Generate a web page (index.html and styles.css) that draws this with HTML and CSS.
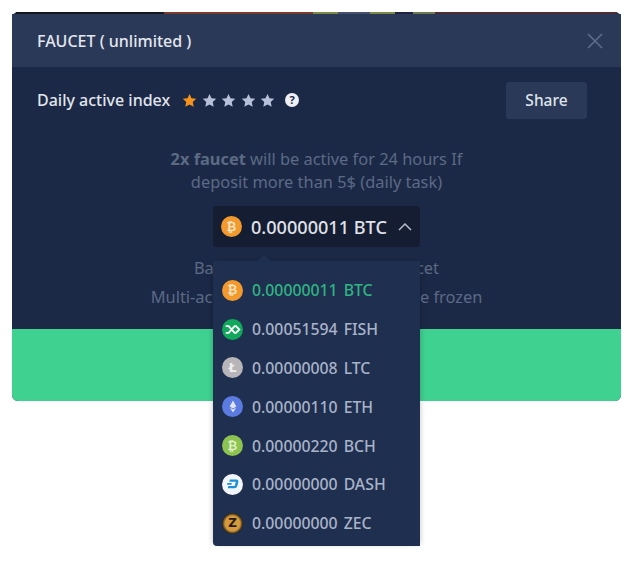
FILE: index.html
```html
<!DOCTYPE html>
<html lang="en">
<head>
<meta charset="utf-8">
<title>Faucet</title>
<link rel="stylesheet" href="styles.css">
</head>
<body>
<main class="modal">
  <div class="strip"><i class="s1"></i><i class="s2"></i><i class="s3"></i><i class="s4"></i><i class="s5"></i><i class="s6"></i><i class="s7"></i><i class="s8"></i></div>
  <header class="head">
    <h1 class="title">FAUCET ( unlimited )</h1>
    <svg class="close" viewBox="0 0 16 16" width="16" height="16"><path d="M1 1l14 14M15 1L1 15" stroke="#5f6d88" stroke-width="1.6" fill="none"/></svg>
  </header>
  <section class="content">
    <div class="index-row">
      <span class="index-label">Daily active index</span>
      <span class="stars">
        <svg class="star" viewBox="0 0 24 24"><path class="on" d="M12 1.500l3.200 6.900 7.600.9-5.600 5.200 1.500 7.500L12 18.300l-6.700 3.700 1.500-7.500L1.200 9.300l7.600-.9z"/></svg>
        <svg class="star" viewBox="0 0 24 24"><path d="M12 1.500l3.200 6.900 7.600.9-5.600 5.200 1.500 7.500L12 18.300l-6.700 3.700 1.500-7.500L1.200 9.300l7.600-.9z"/></svg>
        <svg class="star" viewBox="0 0 24 24"><path d="M12 1.500l3.200 6.900 7.600.9-5.600 5.200 1.500 7.500L12 18.300l-6.700 3.700 1.500-7.500L1.200 9.300l7.600-.9z"/></svg>
        <svg class="star" viewBox="0 0 24 24"><path d="M12 1.500l3.200 6.900 7.600.9-5.600 5.200 1.500 7.500L12 18.300l-6.700 3.700 1.500-7.500L1.200 9.300l7.600-.9z"/></svg>
        <svg class="star" viewBox="0 0 24 24"><path d="M12 1.500l3.200 6.900 7.600.9-5.600 5.200 1.500 7.500L12 18.300l-6.700 3.700 1.500-7.500L1.200 9.300l7.600-.9z"/></svg>
      </span>
      <span class="help">?</span>
      <button class="share">Share</button>
    </div>
    <p class="note"><b>2x faucet</b> will be active for 24 hours If<br>deposit more than 5$ (daily task)</p>
    <div class="picker">
      <div class="selected">
        <span class="coin btc">₿</span>
        <span class="sel-text">0.00000011 BTC</span>
        <svg class="chev" viewBox="0 0 14 8" width="14" height="8"><path d="M1 7l6-6 6 6" stroke="#b4bac8" stroke-width="1.500" fill="none"/></svg>
      </div>
    </div>
    <p class="rule">Balance must be 0 to use faucet</p>
    <p class="rule">Multi-account abuse, balance will be frozen</p>
    <ul class="menu">
      <li class="item active"><span class="coin btc">₿</span><span class="amt">0.00000011</span><span>BTC</span></li>
      <li class="item"><span class="coin fish"><svg viewBox="0 0 20 20" width="17" height="17"><path d="M2 6h3.500l7 8H14l4-4-4-4h-1.500l-7 8H2" stroke="#fff" stroke-width="2.200" fill="none"/></svg></span><span class="amt">0.00051594</span><span>FISH</span></li>
      <li class="item"><span class="coin ltc">Ł</span><span class="amt">0.00000008</span><span>LTC</span></li>
      <li class="item"><span class="coin eth"><svg viewBox="0 0 12 18" width="8" height="13"><path d="M6 0l5 9-5 3-5-3zM1 10.500l5 3 5-3-5 7.500z" fill="#dfe5fb"/></svg></span><span class="amt">0.00000110</span><span>ETH</span></li>
      <li class="item"><span class="coin bch">₿</span><span class="amt">0.00000220</span><span>BCH</span></li>
      <li class="item"><span class="coin dash"><svg viewBox="0 0 20 20" width="16" height="16"><path d="M6 4.500h8q3.200 0 2.600 3l-1 4.500q-.6 3.200-3.600 3.200H3.500l.6-2.700h8l1.500-5.300H5.400zM3 8.800h5.500l-.5 2.200H2.500z" fill="#1c8fd6"/></svg></span><span class="amt">0.00000000</span><span>DASH</span></li>
      <li class="item"><span class="coin zec">Z</span><span class="amt">0.00000000</span><span>ZEC</span></li>
    </ul>
  </section>
  <div class="action"></div>
</main>
</body>
</html>
```
FILE: styles.css
```css
* { box-sizing: border-box; }
html, body { margin: 0; padding: 0; background: #fff; }
body { font-family: "Noto Sans", "Open Sans", sans-serif; height: 570px; overflow: hidden; }

.modal {
  position: relative;
  width: 609px;
  height: 389px;
  margin: 12px 0 0 12px;
  display: flex;
  flex-direction: column;
  background: #1b2947;
  border-radius: 6px;
}
.strip { display: flex; height: 2px; flex: none; margin: 0 4px; overflow: hidden; }
.strip i { display: block; height: 2px; }
.s1 { width: 148px; background: #17171f; }
.s2 { width: 149px; background: #7a3a2c; }
.s3 { width: 25px; background: #7d8a45; }
.s4 { width: 32px; background: #49506a; }
.s5 { width: 25px; background: #7d8a45; }
.s6 { width: 18px; background: #20223c; }
.s7 { width: 22px; background: #6d7a50; }
.s8 { width: 182px; background: #4d2c33; }

.head {
  flex: none;
  height: 53px;
  display: flex;
  align-items: center;
  justify-content: space-between;
  padding: 0 18px 0 25px;
  background: #2a3958;
}
.title { margin: 0; font-size: 16px; font-weight: 500; color: #e4e7ee; }

.content { position: relative; flex: 1; }
.index-row { display: flex; align-items: center; height: 66px; padding: 0 34px 0 25px; }
.index-label { font-size: 16px; font-weight: 500; color: #e2e5ec; }
.stars { display: flex; gap: 4.500px; margin-left: 12px; }
.star { width: 15px; height: 15px; }
.star path { fill: #b6c0d8; }
.star path.on { fill: #f6931c; }
.help {
  width: 14px; height: 14px; margin-left: 10px; border-radius: 50%;
  background: #eef0f4; color: #1b2947;
  font-size: 11px; font-weight: 700; line-height: 14px; text-align: center;
}
.share {
  margin-left: auto;
  width: 81px; height: 37px;
  border: 0; border-radius: 3px;
  background: #2a3958; color: #dfe3ea;
  font: 500 15.500px "Noto Sans", sans-serif;
}
.note {
  margin: 14px 0 0;
  font-size: 16.400px; line-height: 23px; text-align: center; color: #5c6a84;
}
.note b { font-weight: 700; }
.picker { display: flex; justify-content: center; margin-top: 13px; }
.selected {
  display: flex; align-items: center;
  width: 207px; height: 41px; padding: 0 8px;
  background: #151d33; border-radius: 3px;
}
.sel-text { margin-left: 9px; font-size: 18.100px; font-weight: 500; color: #e0e3ea; white-space: nowrap; }
.chev { margin-left: 11px; }
.rule {
  margin: 0;
  font-size: 16.400px; line-height: 29px; text-align: center; color: #5c6a84;
}
.picker + .rule { margin-top: 6px; }

.coin {
  flex: none;
  display: flex; align-items: center; justify-content: center;
  width: 21px; height: 21px; border-radius: 50%;
  font-size: 12px; font-weight: 700; color: #fbe3c4;
  font-family: "DejaVu Sans", sans-serif;
}
.btc { background: #f29a2e; }
.fish { background: #11a85c; }
.ltc { background: #b7b5b8; color: #eee; }
.eth { background: #5c7be0; }
.bch { background: #8cc351; color: #dff0c8; }
.dash { background: #f2f6fa; }
.zec { background: radial-gradient(circle, #d49a3c 50%, #17140f 72%); color: #2a1c08; }

.menu {
  position: absolute;
  left: 201px; top: 194px;
  width: 207px; height: 285px;
  margin: 0; padding: 10px 0 0 9px;
  list-style: none;
  background: #1f2f4f;
  border-radius: 0 0 0 4px;
  box-shadow: 3px 0 5px -2px rgba(0, 0, 0, 0.18), -3px 0 5px -2px rgba(0, 0, 0, 0.18);
}
.menu::before {
  content: "";
  position: absolute; left: 45px; top: -6px;
  border: 6px solid transparent; border-top: 0; border-bottom-color: #1f2f4f;
}
.item { display: flex; align-items: center; height: 38.800px; font-size: 15.800px; font-weight: 500; color: #a9b3c9; white-space: nowrap; }
.item.active { color: #2fb583; }
.amt { margin: 0 6px 0 9px; }

.action { flex: none; height: 72px; background: #3fd18f; border-radius: 0 0 6px 6px; }
```
